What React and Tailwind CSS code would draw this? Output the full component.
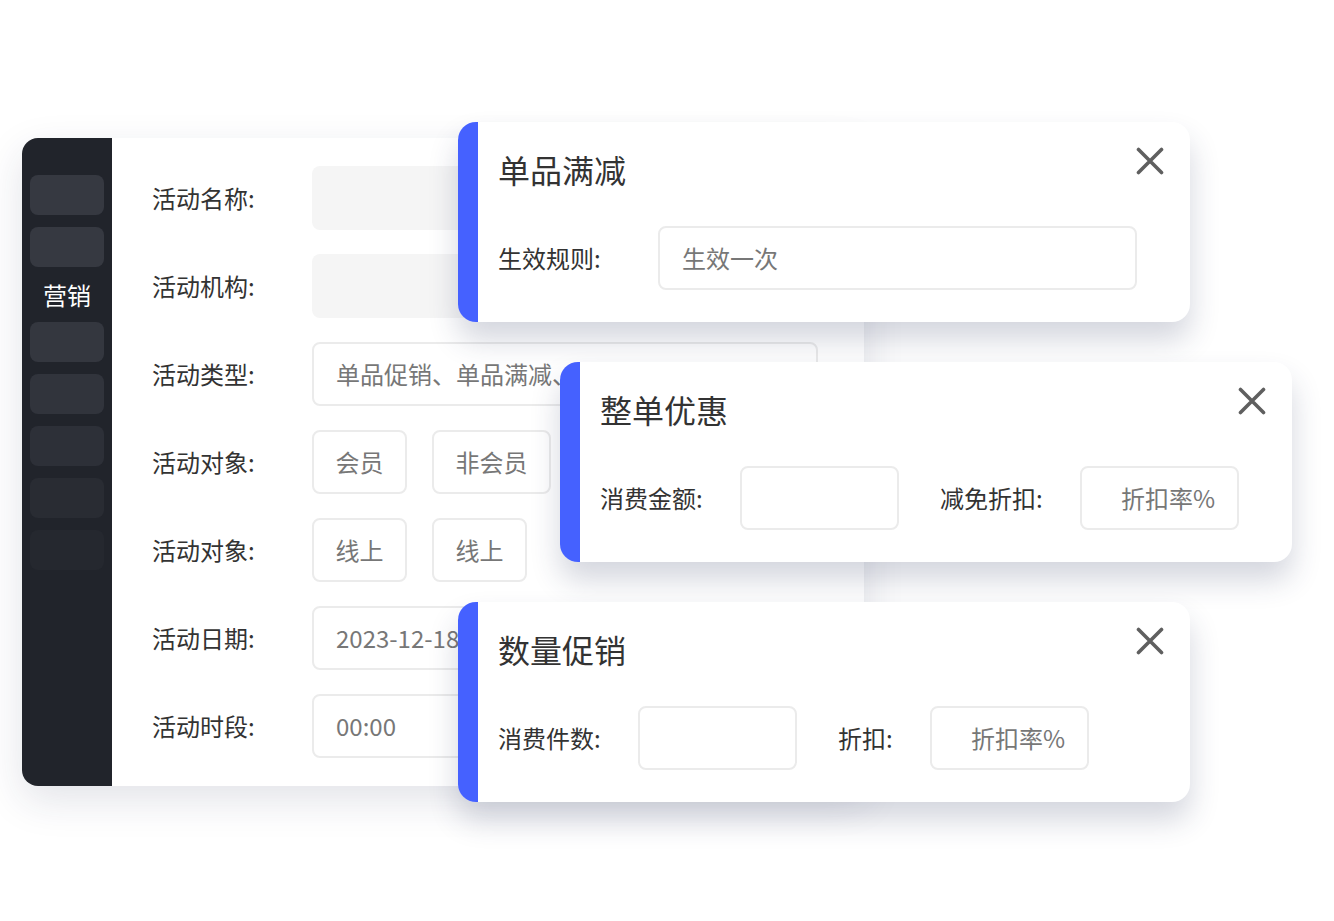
const font = { fontFamily: '"Noto Sans CJK SC", "Noto Sans", sans-serif' };

const sideTop = ["bg-[#363941]", "bg-[#363941]"];
const sideBottom = [
  "bg-[#34373f]",
  "bg-[#31343c]",
  "bg-[#2d3038]",
  "bg-[#292c33]",
  "bg-[#25282f]",
];

function CloseIcon() {
  return (
    <svg width="28" height="28" viewBox="0 0 28 28" fill="none">
      <path d="M2.5 2.5 L25.5 25.5 M25.5 2.5 L2.5 25.5" stroke="#5f5f5f" strokeWidth="3.6" strokeLinecap="round" />
    </svg>
  );
}

function Label({ children, w }) {
  return (
    <div className={`${w} shrink-0 text-[24px] leading-[32px] text-[#333]`}>
      {children}
    </div>
  );
}

function Box({ w, children, align = "left" }) {
  return (
    <div
      className={`${w} h-[64px] shrink-0 flex items-center rounded-[8px] border-2 border-[#ebebeb] bg-white text-[24px] text-[#777] overflow-hidden whitespace-nowrap ${
        align === "right" ? "justify-end pr-[22px]" : align === "center" ? "justify-center" : "pl-[22px]"
      }`}
    >
      {children}
    </div>
  );
}

function Card({ className, title, children }) {
  return (
    <div
      className={`absolute w-[732px] h-[200px] flex rounded-[18px] overflow-hidden bg-white shadow-[0_18px_30px_rgba(40,50,90,0.2)] ${className}`}
    >
      <div className="w-[20px] shrink-0 bg-[#4561ff]" />
      <div className="relative flex-1 pl-[20px]">
        <div className="mt-[25px] h-[44px] text-[32px] leading-[44px] text-[#333]">{title}</div>
        <button className="absolute top-[25px] right-[26px]">
          <CloseIcon />
        </button>
        <div className="mt-[35px] flex items-center h-[64px]">{children}</div>
      </div>
    </div>
  );
}

export default function App() {
  const rows = [
    { label: "活动名称:", field: <div className="w-[506px] h-[64px] rounded-[8px] bg-[#f5f5f5]" /> },
    { label: "活动机构:", field: <div className="w-[506px] h-[64px] rounded-[8px] bg-[#f5f5f5]" /> },
    { label: "活动类型:", field: <Box w="w-[506px]">单品促销、单品满减、整单优惠</Box> },
    {
      label: "活动对象:",
      field: (
        <div className="flex gap-[25px]">
          <Box w="w-[95px]" align="center">会员</Box>
          <Box w="w-[119px]" align="center">非会员</Box>
        </div>
      ),
    },
    {
      label: "活动对象:",
      field: (
        <div className="flex gap-[25px]">
          <Box w="w-[95px]" align="center">线上</Box>
          <Box w="w-[95px]" align="center">线上</Box>
        </div>
      ),
    },
    { label: "活动日期:", field: <Box w="w-[506px]">2023-12-18</Box> },
    { label: "活动时段:", field: <Box w="w-[506px]">00:00</Box> },
  ];

  return (
    <div className="relative w-[1334px] h-[921px] bg-white overflow-hidden" style={font}>
      <div className="ml-[22px] mt-[138px] w-[842px] h-[648px] flex rounded-l-[16px] overflow-hidden bg-white shadow-[0_14px_40px_rgba(30,40,80,0.13)]">
        <div className="w-[90px] shrink-0 bg-[#21242b] flex flex-col items-center pt-[37px] gap-[12px]">
          {sideTop.map((c, i) => (
            <div key={"t" + i} className={`w-[74px] h-[40px] rounded-[8px] ${c}`} />
          ))}
          <div className="h-[31px] leading-[31px] text-[24px] text-white">营销</div>
          {sideBottom.map((c, i) => (
            <div key={"b" + i} className={`w-[74px] h-[40px] rounded-[8px] ${c}`} />
          ))}
        </div>
        <div className="flex-1 pl-[40px] pt-[28px] flex flex-col gap-[24px]">
          {rows.map((r, i) => (
            <div key={i} className="flex items-center h-[64px]">
              <Label w="w-[160px]">{r.label}</Label>
              {r.field}
            </div>
          ))}
        </div>
      </div>

      <Card className="left-[458px] top-[122px]" title="单品满减">
        <Label w="w-[160px]">生效规则:</Label>
        <Box w="w-[479px]">生效一次</Box>
      </Card>

      <Card className="left-[560px] top-[362px]" title="整单优惠">
        <Label w="w-[140px]">消费金额:</Label>
        <Box w="w-[159px]" />
        <div className="w-[41px]" />
        <Label w="w-[140px]">减免折扣:</Label>
        <Box w="w-[159px]" align="right">折扣率%</Box>
      </Card>

      <Card className="left-[458px] top-[602px]" title="数量促销">
        <Label w="w-[140px]">消费件数:</Label>
        <Box w="w-[159px]" />
        <div className="w-[41px]" />
        <Label w="w-[92px]">折扣:</Label>
        <Box w="w-[159px]" align="right">折扣率%</Box>
      </Card>
    </div>
  );
}
